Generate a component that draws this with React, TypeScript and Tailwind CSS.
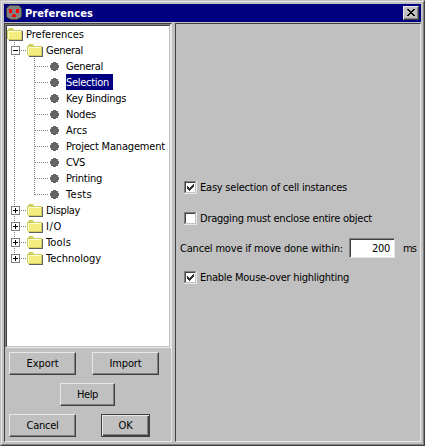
import { useLayoutEffect, useRef, useState } from "react";

function Text({ w, children, className = "pt-[2px]" }: { w: number; children: string; className?: string }) {
  const ref = useRef<HTMLSpanElement>(null);
  const [spacing, setSpacing] = useState(0);
  useLayoutEffect(() => {
    if (ref.current) setSpacing((w - ref.current.getBoundingClientRect().width) / children.length);
  }, [w, children]);
  return (
    <span ref={ref} className={`inline-block whitespace-pre ${className}`} style={{ letterSpacing: spacing }}>
      {children}
    </span>
  );
}

function Folder() {
  return (
    <svg width="16" height="14" viewBox="0 0 16 14" shapeRendering="crispEdges" className="shrink-0">
      <path d="M2 13H15V4H16V14H2Z" fill="#606060" />
      <path d="M0 3H1V2H2V1H6V2H7V3H15V13H1V12H0Z" fill="#cece63" />
      <path d="M1 4H14V12H1Z" fill="#ffffce" />
      <path d="M2 5H14V12H2Z" fill="#f7ef84" />
      <path d="M3 6h1v1h-1zM7 6h1v1h-1zM11 6h1v1h-1zM5 8h1v1h-1zM9 8h1v1h-1zM3 10h1v1h-1zM7 10h1v1h-1zM11 10h1v1h-1z" fill="#e7d763" />
    </svg>
  );
}

function Toggle({ open }: { open?: boolean }) {
  return (
    <svg width="9" height="9" viewBox="0 0 9 9" shapeRendering="crispEdges" className="mt-px shrink-0">
      <path d="M0 0H9V9H0Z" fill="#808080" />
      <path d="M1 1H8V8H1Z" fill="#fff" />
      <path d={open ? "M2 4H7V5H2Z" : "M2 4H4V2H5V4H7V5H5V7H4V5H2Z"} fill="#000" />
    </svg>
  );
}

function Branch({ label, w, open }: { label: string; w: number; open?: boolean }) {
  return (
    <div className="flex h-4 items-center pl-1">
      <Toggle open={open} />
      <svg width="7" height="1" className="mt-px shrink-0" shapeRendering="crispEdges">
        <path d="M1 0h1v1h-1zM3 0h1v1h-1zM5 0h1v1h-1z" fill="#808080" />
      </svg>
      <Folder />
      <Text w={w} className="ml-[3px] pt-[2px]">{label}</Text>
    </div>
  );
}

function Leaf({ label, w, selected }: { label: string; w: number; selected?: boolean }) {
  return (
    <div className="flex h-4 items-center pl-[28px]">
      <svg width="26" height="9" viewBox="0 0 26 9" className="mt-px shrink-0" shapeRendering="crispEdges">
        <path d="M0 4.5H14" stroke="#808080" strokeDasharray="1 1" />
        <path d="M18 0H21V1H23V3H24V6H23V8H21V9H18V8H16V6H15V3H16V1H18Z" fill="#646464" />
      </svg>
      <span className={`ml-[5px] flex h-4 items-center pr-[4px] ${selected ? "bg-[#000080] text-white" : ""}`}>
        <Text w={w}>{label}</Text>
      </span>
    </div>
  );
}

const leaves: [string, number][] = [
  ["General", 37], ["Selection", 43], ["Key Bindings", 60], ["Nodes", 30], ["Arcs", 21],
  ["Project Management", 99], ["CVS", 19], ["Printing", 36], ["Tests", 26],
];

function Button({ label, w, className, primary }: { label: string; w: number; className: string; primary?: boolean }) {
  const edge = primary
    ? "border-[#404040] shadow-[inset_1px_1px_#e8e8e8,inset_-1px_-1px_#404040,inset_-2px_-2px_#808080]"
    : "border-t-[#e8e8e8] border-l-[#e8e8e8] border-r-[#404040] border-b-[#404040] shadow-[inset_-1px_-1px_#808080]";
  return (
    <button className={`flex h-[23px] items-center justify-center border ${edge} ${className}`}>
      <Text w={w} className="pt-0">{label}</Text>
    </button>
  );
}

function Check({ label, w, checked }: { label: string; w: number; checked?: boolean }) {
  return (
    <div className="flex h-4 items-center pl-[8px]">
      <svg width="13" height="13" viewBox="0 0 13 13" shapeRendering="crispEdges" className="mt-px shrink-0">
        <path d="M0 0H13V13H0Z" fill="#e8e8e8" />
        <path d="M0 0H12V1H1V12H0Z" fill="#808080" />
        <path d="M1 1H11V2H2V11H1Z" fill="#404040" />
        <path d="M11 1H12V12H1V11H11Z" fill="#c0c0c0" />
        <path d="M2 2H11V11H2Z" fill="#fff" />
        {checked && <path d="M3 5h1v1h1v1h1v-1h1v-1h1v-1h1v-1h1v3h-1v1h-1v1h-1v1h-1v1h-1v-1h-1v-1h-1z" fill="#303030" />}
      </svg>
      <Text w={w} className="ml-[3px] pt-[2px]">{label}</Text>
    </div>
  );
}

export default function App() {
  return (
    <div className="h-[446px] w-[425px] border border-[#c0c0c0] border-r-[#404040] border-b-[#404040] bg-[#c0c0c0] font-['DejaVu_Sans_Condensed','DejaVu_Sans',sans-serif] text-[11px] leading-4 text-black [font-stretch:condensed]">
      <div className="flex h-full flex-col border border-[#e8e8e8] border-r-[#808080] border-b-[#808080] p-[2px]">
        <header className="flex h-[18px] shrink-0 items-center bg-[#000080] pr-[2px] pl-[2px] text-white">
          <svg width="16" height="16" viewBox="0 0 16 16" shapeRendering="crispEdges">
            <path d="M3 0H13V1H15V3H16V12H15V13H14V14H12V15H4V14H2V13H1V12H0V3H1V1H3Z" fill="#404040" />
            <path d="M3 1H13V2H14V3H15V12H14V13H12V14H4V13H2V12H1V3H2V2H3Z" fill="#808080" />
            <path d="M3 4H6V8H3ZM10 4H13V8H10ZM7 9H9V10H10V12H6V10H7Z" fill="#f00" />
          </svg>
          <Text w={68} className="ml-[3px] pt-[2px] font-bold">Preferences</Text>
          <button className="ml-auto h-[14px] w-4 border border-t-[#e8e8e8] border-l-[#e8e8e8] border-r-[#404040] border-b-[#404040] bg-[#c0c0c0] shadow-[inset_-1px_-1px_#808080]">
            <svg width="14" height="12" viewBox="0 0 14 12" shapeRendering="crispEdges">
              <path d="M3 2h2v1h1v1h2v-1h1v-1h2v1h-1v1h-1v1h-1v1h1v1h1v1h1v1h-2v-1h-1v-1h-2v1h-1v1h-2v-1h1v-1h1v-1h1v-1h-1v-1h-1v-1h-1z" fill="#000" />
            </svg>
          </button>
        </header>
        <main className="mt-px flex min-h-0 flex-1">
          <section className="flex w-[168px] flex-col border border-[#404040] border-r-[#e8e8e8] border-b-[#e8e8e8]">
            <div className="h-[324px] border border-[#808080] border-r-[#e8e8e8] border-b-[#e8e8e8] bg-white">
              <div className="relative h-full border border-[#404040] border-r-[#c0c0c0] border-b-[#c0c0c0]">
                <svg className="absolute top-[16px] left-[7px]" width="30" height="230" shapeRendering="crispEdges">
                  <path d="M.5 0V213M20.5 16V153" fill="none" stroke="#808080" strokeDasharray="1 1" />
                </svg>
                <div className="relative">
                  <div className="flex h-4 items-center"><Folder /><Text w={58} className="ml-[3px] pt-[2px]">Preferences</Text></div>
                  <Branch label="General" w={37} open />
                  {leaves.map(([label, w]) => <Leaf key={label} label={label} w={w} selected={label === "Selection"} />)}
                  <Branch label="Display" w={34} />
                  <Branch label="I/O" w={16} />
                  <Branch label="Tools" w={25} />
                  <Branch label="Technology" w={55} />
                </div>
              </div>
            </div>
            <div className="flex flex-col gap-2 pt-1">
              <div className="flex"><Button label="Export" w={32} className="ml-1 w-[67px]" /><Button label="Import" w={32} className="ml-4 w-[67px]" /></div>
              <Button label="Help" w={21} className="ml-[55px] w-[55px]" />
              <div className="flex"><Button label="Cancel" w={32} className="ml-1 w-[67px]" /><Button label="OK" w={14} primary className="ml-[25px] w-[49px]" /></div>
            </div>
          </section>
          <section className="ml-[3px] flex-1 border border-[#404040] border-r-[#e8e8e8] border-b-[#e8e8e8] pt-[155px]">
            <Check label="Easy selection of cell instances" w={147} checked />
            <div className="mt-[15px]"><Check label="Dragging must enclose entire object" w={172} /></div>
            <div className="mt-[12px] flex h-5 items-center pl-1">
              <Text w={163}>Cancel move if move done within:</Text>
              <div className="ml-[6px] flex h-[20px] w-[46px] items-center justify-end border border-[#808080] border-r-[#e8e8e8] border-b-[#e8e8e8] bg-white pr-[4px] shadow-[inset_1px_1px_#404040]"><Text w={18}>200</Text></div>
              <Text w={13} className="ml-2 pt-[2px]">ms</Text>
            </div>
            <div className="mt-[11px]"><Check label="Enable Mouse-over highlighting" w={149} checked /></div>
          </section>
        </main>
      </div>
    </div>
  );
}
